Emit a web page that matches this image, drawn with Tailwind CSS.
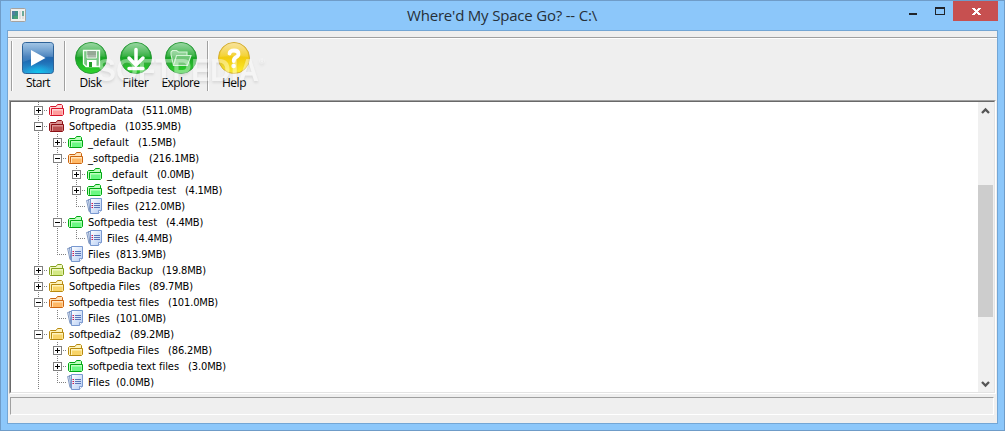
<!DOCTYPE html>
<html lang="en">
<head>
<meta charset="utf-8">
<title>Where'd My Space Go? -- C:\</title>
<script src="https://cdn.jsdelivr.net/npm/@tailwindcss/browser@4"></script>
</head>
<body class="overflow-hidden">
<svg class="absolute size-0">
  <defs>
    <linearGradient id="blue" x1="0" y1="0" x2="0" y2="1"><stop offset="0" stop-color="#5c9ad2"/><stop offset=".45" stop-color="#2468b0"/><stop offset=".6" stop-color="#1f6cb4"/><stop offset="1" stop-color="#2b9fd8"/></linearGradient>
    <radialGradient id="cyan" cx=".5" cy="1" r=".5"><stop offset="0" stop-color="#10c8ee"/><stop offset="1" stop-color="#10b8ee" stop-opacity="0"/></radialGradient>
    <linearGradient id="green" x1="0" y1="0" x2="0" y2="1"><stop offset="0" stop-color="#4cb85c"/><stop offset=".5" stop-color="#18a424"/><stop offset="1" stop-color="#2fd62c"/></linearGradient>
    <linearGradient id="yellow" x1="0" y1="0" x2="0" y2="1"><stop offset="0" stop-color="#f3cf55"/><stop offset=".5" stop-color="#f2cc10"/><stop offset="1" stop-color="#fff02a"/></linearGradient>
    <linearGradient id="shine" x1="0" y1="0" x2="0" y2="1"><stop offset="0" stop-color="#fff" stop-opacity=".42"/><stop offset="1" stop-color="#fff" stop-opacity=".1"/></linearGradient>
    <linearGradient id="page" x1="0" y1="0" x2="1" y2="1"><stop offset="0" stop-color="#fff"/><stop offset="1" stop-color="#b4ccf4"/></linearGradient>
  </defs>
</svg>
<div class="flex h-[431px] w-[1005px] flex-col border border-[#6f9cc8] bg-[#8cc7fa] px-[6px] font-['Open_Sans','Noto_Sans',sans-serif] text-black">
  <header class="flex h-[29px] shrink-0">
    <svg class="mt-[7px] ml-[3px] h-[14px] w-4 shrink-0" viewBox="0 0 16 14">
      <rect x=".5" y=".5" width="15" height="13" rx="1" fill="#f0f0ee" stroke="#a6a29e"/>
      <rect x="2" y="3" width="6" height="8" fill="#3f8f86"/><path d="M2 3h3v4H2z" fill="#537f9f"/><path d="M4 8h4v3H4z" fill="#49a276"/>
      <rect x="9" y="3" width="2" height="8" fill="#dedede"/><rect x="12" y="3" width="2" height="6" fill="#6caa9a"/><path d="M12 8h2v3h-2z" fill="#ddd"/>
    </svg>
    <h1 class="ml-[381px] w-[191px] shrink-0 whitespace-nowrap text-[15px] leading-[29px] text-[#262f38]" data-fit="190" data-font="15px 'Open Sans'">Where'd My Space Go? -- C:\</h1>
    <svg class="ml-[301px] h-5 w-[99px] shrink-0" viewBox="0 0 99 20" shape-rendering="crispEdges">
      <path d="M10 12h8v2h-8z" fill="#20242a"/>
      <path d="M36 6h10v8H36zM37 8v5h8V8z" fill="#20242a" fill-rule="evenodd"/>
      <path d="M54 0h45v20H54z" fill="#c75050"/>
      <path d="M73 7h3v1h1v1h1V8h1V7h3v1h-1v1h-1v1h-1v1h1v1h1v1h1v1h-3v-1h-1v-1h-1v1h-1v1h-3v-1h1v-1h1v-1h1v-1h-1V9h-1V8h-1z" fill="#fff"/>
    </svg>
  </header>
  <main class="flex h-[394px] w-[991px] shrink-0 flex-col border border-[#73a6d5] bg-[#efefef]">
    <div class="h-[6px] shrink-0"></div>
    <div class="h-px shrink-0 bg-[#a0a0a0]"></div>
    <div class="h-px shrink-0 bg-white"></div>
    <nav class="relative flex h-[61px] shrink-0 pt-[2px] pl-[3px] text-xs">
      <i class="h-[50px] w-[2px] border-l border-r border-l-[#a0a0a0] border-r-white"></i>
      <button class="flex w-[50px] flex-col items-center">
        <svg class="mt-px size-8" viewBox="0 0 32 32"><rect x=".5" y=".5" width="31" height="31" rx="3" fill="url(#blue)" stroke="#2d6298"/><rect x="1" y="12" width="30" height="19" fill="url(#cyan)"/><path d="M1 3Q1 1 3 1H29Q31 1 31 3V15Q16 14 1 20z" fill="url(#shine)"/><path d="M9 8L23.500 16 9 24z" fill="#fff"/></svg>
        <span class="w-6 whitespace-nowrap text-left leading-[18px]" data-fit="24">Start</span>
      </button>
      <i class="ml-px h-[50px] w-[2px] border-l border-r border-l-[#a0a0a0] border-r-white"></i>
      <button class="ml-[2px] flex w-[45px] flex-col items-center">
        <svg class="mt-px size-8" viewBox="0 0 32 32"><circle cx="16" cy="16" r="15.500" fill="url(#green)" stroke="#2c9a3a"/><path d="M2 15A14 14 0 0 1 30 15Q16 13 2 15z" fill="url(#shine)"/><path d="M8.500 8.500H24.500V24.500H11L8.500 22z" fill="#79c883" stroke="#f5fff5" stroke-width="1.300"/><path d="M12 9V16H21.500V9" fill="#a8b8a8" stroke="#e8f5e8"/><path d="M12 10H21M12 12H21" stroke="#829a82"/><rect x="12" y="18" width="9.500" height="7" fill="#fff"/><rect x="14" y="20" width="3" height="5" fill="#249b2a"/></svg>
        <span class="w-[22px] whitespace-nowrap text-left leading-[18px]" data-fit="22">Disk</span>
      </button>
      <button class="flex w-[45px] flex-col items-center">
        <svg class="mt-px size-8" viewBox="0 0 32 32"><circle cx="16" cy="16" r="15.500" fill="url(#green)" stroke="#2c9a3a"/><path d="M2 15A14 14 0 0 1 30 15Q16 13 2 15z" fill="url(#shine)"/><path d="M16 7.500V22M9 16L16 23 23 16M9 26.500H23" fill="none" stroke="#fff" stroke-width="3.500" stroke-linecap="round" stroke-linejoin="round"/></svg>
        <span class="w-[26px] whitespace-nowrap text-left leading-[18px]" data-fit="26">Filter</span>
      </button>
      <button class="flex w-[45px] flex-col items-center">
        <svg class="mt-px size-8" viewBox="0 0 32 32"><circle cx="16" cy="16" r="15.500" fill="url(#green)" stroke="#2c9a3a"/><path d="M2 15A14 14 0 0 1 30 15Q16 13 2 15z" fill="url(#shine)"/><path d="M8.500 23.500L6 12.500V10L7.500 8.500H11.500L13.500 10H22V13.500M8.500 23.500L11.500 13.500H26L22.500 23.500z" fill="#fff" fill-opacity=".38" stroke="#d4f4d6" stroke-width="1.100"/></svg>
        <span class="w-[38px] whitespace-nowrap text-left leading-[18px]" data-fit="38">Explore</span>
      </button>
      <i class="ml-[4px] h-[50px] w-[2px] border-l border-r border-l-[#a0a0a0] border-r-white"></i>
      <button class="ml-[2px] flex w-[46px] flex-col items-center">
        <svg class="mt-px size-8" viewBox="0 0 32 32"><circle cx="16" cy="16" r="15.500" fill="url(#yellow)" stroke="#d2ad35"/><path d="M2 15A14 14 0 0 1 30 15Q16 13 2 15z" fill="url(#shine)"/><path d="M11.500 11.500Q12 8.500 16 8.500 20.500 8.500 20.500 12 20.500 14 18 15.200 15.700 16.500 15.700 19" fill="none" stroke="#fff" stroke-width="3.800" stroke-linecap="round"/><circle cx="15.600" cy="24" r="2.300" fill="#fff"/></svg>
        <span class="w-6 whitespace-nowrap text-left leading-[18px]" data-fit="24">Help</span>
      </button>
      <svg class="pointer-events-none absolute top-[11px] left-[86px] h-[38px] w-[180px] opacity-40 [filter:drop-shadow(0_2px_1px_#8888)]" viewBox="0 0 180 38">
        <g font-family="Liberation Sans, sans-serif" font-size="32" font-weight="700" fill="#fff">
          <text x="3" y="31" textLength="162" lengthAdjust="spacingAndGlyphs">SOFTPEDIA</text>
          <text x="165" y="14" font-size="8">®</text>
        </g>
      </svg>
    </nav>
    <section class="ml-px flex h-[294px] w-[987px] shrink-0 border border-t-[#a0a0a0] border-r-white border-b-white border-l-[#a0a0a0]">
      <div class="flex w-full border border-t-[#696969] border-r-[#e3e3e3] border-b-[#e3e3e3] border-l-[#696969] bg-white">
        <div id="tree" class="h-[290px] flex-1 overflow-hidden pl-[18px] font-['DejaVu_Sans_Condensed','DejaVu_Sans',sans-serif] text-[11px]"></div>
        <aside class="flex h-full w-[16px] flex-col bg-[#f0f0f0]">
          <svg class="h-[83px] w-[15px] shrink-0" viewBox="0 0 15 83"><path d="M4 11L7.500 7.500 11 11" fill="none" stroke="#555" stroke-width="2.300"/></svg>
          <div class="h-[132px] w-[15px] shrink-0 bg-[#cdcdcd]"></div>
          <svg class="h-[75px] w-[15px] shrink-0" viewBox="0 0 15 75"><path d="M4 65L7.500 68.500 11 65" fill="none" stroke="#555" stroke-width="2.300"/></svg>
        </aside>
      </div>
    </section>
    <footer class="mt-[3px] ml-[2px] h-[18px] w-[984px] shrink-0 border border-t-[#a0a0a0] border-r-white border-b-white border-l-[#a0a0a0]"></footer>
  </main>
</div>
<script>
// level, expander, guides per level, icon, name, name width, gap, size, size width
const rows = [
  [0,'+','F','red','ProgramData',64,9,'(511.0MB)',50],
  [0,'-','F','dark','Softpedia',47,9,'(1035.9MB)',56],
  [1,'+','FF','green','_default',41,9,'(1.5MB)',38],
  [1,'-','FF','orange','_softpedia',51,10,'(216.1MB)',50],
  [2,'+','FFF','green','_default',41,9,'(0.0MB)',37],
  [2,'+','FFF','green','Softpedia test',69,9,'(4.1MB)',37],
  [2,'','FFH','file','Files',22,6,'(212.0MB)',50],
  [1,'-','FF','green','Softpedia test',69,9,'(4.4MB)',37],
  [2,'','FFH','file','Files',22,6,'(4.4MB)',37],
  [1,'','FH','file','Files',22,6,'(813.9MB)',50],
  [0,'+','F','lime','Softpedia Backup',84,9,'(19.8MB)',44],
  [0,'+','F','yellow','Softpedia Files',71,9,'(89.7MB)',44],
  [0,'-','F','orange','softpedia test files',90,9,'(101.0MB)',50],
  [1,'','FH','file','Files',22,6,'(101.0MB)',50],
  [0,'-','F','yellow','softpedia2',52,9,'(89.2MB)',44],
  [1,'+','FF','yellow','Softpedia Files',71,9,'(86.2MB)',44],
  [1,'+','FF','green','softpedia text files',91,9,'(3.0MB)',38],
  [1,'','FH','file','Files',22,6,'(0.0MB)',38]
];
const colors = {
  red: ['#d8142a','#ffd4d4','#ff9c9c'], dark: ['#8c1015','#dc9494','#b95050'],
  green: ['#00a812','#c0ffc0','#6cf884'], orange: ['#cc6410','#ffe4bc','#ffb866'],
  lime: ['#83a01c','#f2f8c4','#d3e884'], yellow: ['#b88a10','#fff4bc','#f8d468']
};
const dots = d => `<path d="${d}" stroke="#808080" stroke-dasharray="1 1" fill="none"/>`;
function cell(kind, own, sign) {
  let s = dots(kind === 'F' ? 'M9.500 0V16' : 'M9.500 0V9');
  if (own) s += dots('M9 8.500H19');
  if (sign) {
    s += '<rect x="5.500" y="4.500" width="8" height="8" fill="#fff" stroke="#808080"/><path d="M7 8.500H12" stroke="#000"/>';
    if (sign === '+') s += '<path d="M9.500 6V11" stroke="#000"/>';
  }
  return `<svg class="h-4 w-[19px] shrink-0" viewBox="0 0 19 16" shape-rendering="crispEdges">${s}</svg>`;
}
function icon(type) {
  if (type === 'file') return `<svg class="h-4 w-4 shrink-0" viewBox="0 0 16 16">
    <path d="M.6 2.500L4 1.800V13L3 13.500z" fill="#e8f0fc" stroke="#6482b4" stroke-width=".8"/>
    <path d="M2.500 1.500H6V14L4 14.500z" fill="#dce7fa" stroke="#6482b4" stroke-width=".8"/>
    <path d="M4.500 .5H15.500V12.500L12.500 15.500H4.500z" fill="url(#page)" stroke="#7898d0"/>
    <path d="M8 5.500H14M8 7.500H14M8 9.500H14" stroke="#5a76b8"/><path d="M5.500 5.500H7M5.500 7.500H7M5.500 9.500H7" stroke="#d01850"/>
    <path d="M15.500 12.500H12.500V15.500" fill="#fff" stroke="#6d8cc6" stroke-width=".8"/></svg>`;
  const [line, light, fill] = colors[type];
  return `<svg class="h-4 w-4 shrink-0" viewBox="0 0 16 16">
    <path d="M2.500 13.500L1.500 12.500V5.500L2.500 4.500H8L9.500 2.500H13.500L14.500 3.500V7" fill="${light}" stroke="${line}"/>
    <path d="M3.500 6.500H15.500V12.500L14.500 13.500H2.500L3.500 12.500z" fill="${light}" stroke="${line}"/>
    <path d="M5 8.500H14.500V13H5z" fill="${fill}"/></svg>`;
}
const treeFont = "11px 'DejaVu Sans Condensed'";
document.getElementById('tree').innerHTML = rows.map(([level, sign, guides, type, name, w, gap, size, sw]) =>
  `<div class="flex h-4 whitespace-pre leading-[18px]">${[...guides].map((g, i) => cell(g, i === level, i === level ? sign : '')).join('')}${icon(type)}<span class="ml-[5px] shrink-0" style="width:${w}px" data-fit="${w}" data-font="${treeFont}">${name}</span><span class="shrink-0" style="width:${sw}px;margin-left:${gap}px" data-fit="${sw}" data-font="${treeFont}">${size}</span></div>`
).join('');
// Spread each label's letters over its column width
const pen = document.createElement('canvas').getContext('2d');
document.querySelectorAll('[data-fit]').forEach(el => {
  pen.font = el.dataset.font || "12px 'Open Sans'";
  el.style.letterSpacing = (el.dataset.fit - pen.measureText(el.textContent).width) / el.textContent.length + 'px';
});
</script>
</body>
</html>
